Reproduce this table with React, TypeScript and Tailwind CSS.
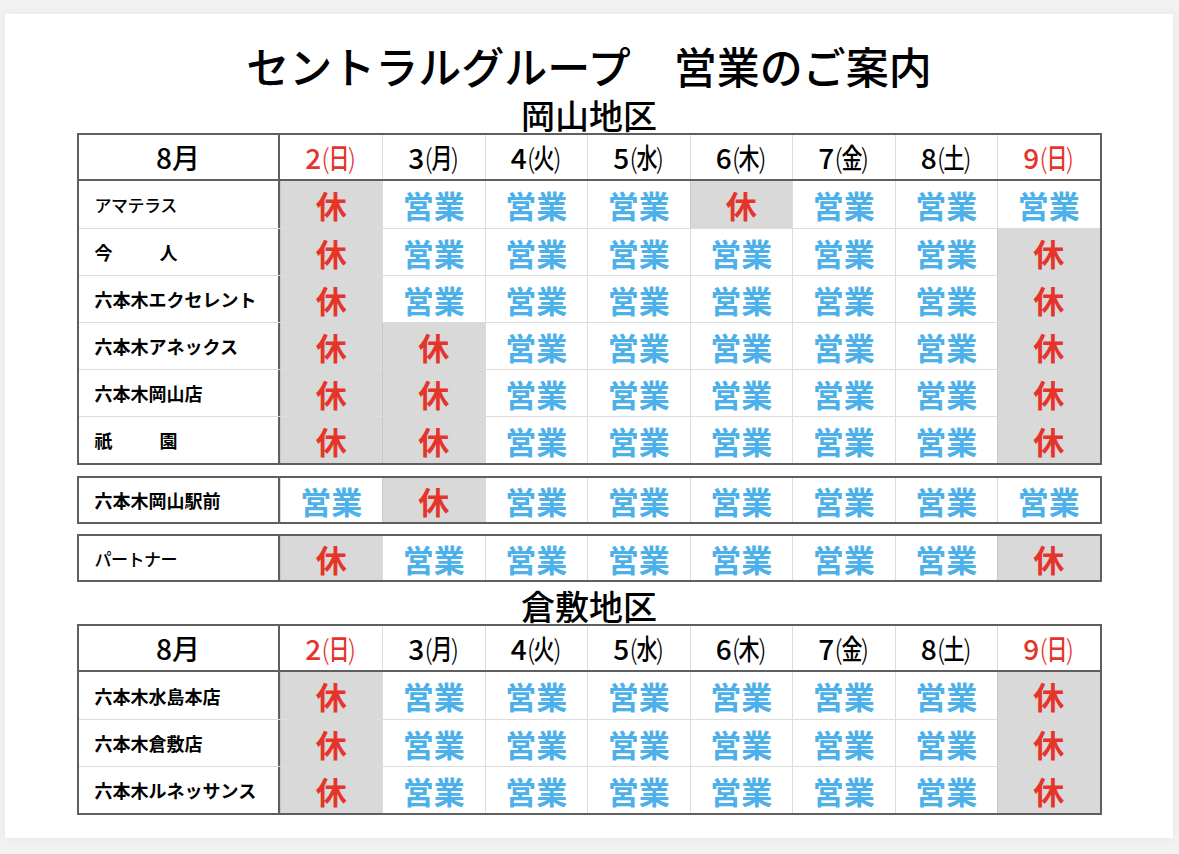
import React from 'react';

type Status = 'open' | 'closed';

type Row = {
  name: string[];
  days: Status[];
  small?: boolean;
};

const O: Status = 'open';
const C: Status = 'closed';

const days = [
  { n: '2', d: '日', red: true },
  { n: '3', d: '月' },
  { n: '4', d: '火' },
  { n: '5', d: '水' },
  { n: '6', d: '木' },
  { n: '7', d: '金' },
  { n: '8', d: '土' },
  { n: '9', d: '日', red: true },
];

const okayamaRows: Row[] = [
  { name: ['アマテラス'], days: [C, O, O, O, C, O, O, O], small: true },
  { name: ['今', '人'], days: [C, O, O, O, O, O, O, C] },
  { name: ['六本木エクセレント'], days: [C, O, O, O, O, O, O, C] },
  { name: ['六本木アネックス'], days: [C, C, O, O, O, O, O, C] },
  { name: ['六本木岡山店'], days: [C, C, O, O, O, O, O, C] },
  { name: ['祇', '園'], days: [C, C, O, O, O, O, O, C] },
];

const ekimaeRows: Row[] = [{ name: ['六本木岡山駅前'], days: [O, C, O, O, O, O, O, O] }];

const partnerRows: Row[] = [{ name: ['パートナー'], days: [C, O, O, O, O, O, O, C], small: true }];

const kurashikiRows: Row[] = [
  { name: ['六本木水島本店'], days: [C, O, O, O, O, O, O, C] },
  { name: ['六本木倉敷店'], days: [C, O, O, O, O, O, O, C] },
  { name: ['六本木ルネッサンス'], days: [C, O, O, O, O, O, O, C] },
];

const font = { fontFamily: '"Noto Sans CJK JP", "Noto Sans", sans-serif' };

const DayLabel: React.FC<{ n: string; d: string; red?: boolean }> = ({ n, d, red }) => (
  <div className={`flex items-center justify-center text-[28px] font-medium leading-none ${red ? 'text-[#e5352b]' : 'text-black'}`}>
    <span>{n}</span>
    <span className="font-light text-[27px] -mr-[1px]">(</span>
    <span className="inline-flex w-[20px] justify-center">
      <span className="inline-block scale-x-[0.75]">{d}</span>
    </span>
    <span className="font-light text-[27px] -ml-[1px]">)</span>
  </div>
);

const Cell: React.FC<{ status: Status }> = ({ status }) =>
  status === 'open' ? (
    <div className="flex items-center justify-center border-l border-[#dcdcdc] text-[31px] font-bold leading-none text-[#4cb0ea]">
      営業
    </div>
  ) : (
    <div className="flex items-center justify-center border-l border-[#c8c8c8] bg-[#d9d9d9] text-[31px] font-bold leading-none text-[#e5352b]">
      休
    </div>
  );

const BodyRow: React.FC<{ row: Row; height: string; first: boolean }> = ({ row, height, first }) => (
  <div className={`grid grid-cols-[201px_repeat(8,minmax(0,1fr))] ${height} ${first ? '' : 'border-t border-[#dcdcdc]'}`}>
    <div className="flex items-center border-r-2 border-[#5f5f5f] pl-[16px]">
      {row.name.length > 1 ? (
        <div className="flex gap-[47px] text-[18px] font-bold leading-none text-black">
          {row.name.map(part => (
            <span key={part}>{part}</span>
          ))}
        </div>
      ) : (
        <span
          className={`leading-none text-black ${row.small ? 'text-[17px] font-medium tracking-[-0.5px]' : 'text-[18px] font-bold'}`}
        >
          {row.name[0]}
        </span>
      )}
    </div>
    {row.days.map((s, i) => (
      <Cell key={i} status={s} />
    ))}
  </div>
);

const Table: React.FC<{ rows: Row[]; header?: boolean; rowHeight: string }> = ({ rows, header, rowHeight }) => (
  <div className="w-[1025px] border-2 border-[#5f5f5f]">
    {header && (
      <div className="grid h-[46px] grid-cols-[201px_repeat(8,minmax(0,1fr))] border-b-2 border-[#5f5f5f]">
        <div className="flex items-center justify-center border-r-2 border-[#5f5f5f] text-[28px] font-medium leading-none text-black">
          8月
        </div>
        {days.map((d, i) => (
          <div key={i} className={`flex items-center justify-center ${i === 0 ? '' : 'border-l border-[#dcdcdc]'}`}>
            <DayLabel n={d.n} d={d.d} red={d.red} />
          </div>
        ))}
      </div>
    )}
    {rows.map((r, i) => (
      <BodyRow key={r.name.join('')} row={r} height={rowHeight} first={i === 0} />
    ))}
  </div>
);

export default function App() {
  return (
    <div className="min-h-[854px] w-full bg-[#f2f2f2] pl-[5px] pr-[6px] pt-[14px]" style={font}>
      <div className="flex h-[824px] flex-col items-center bg-white pt-[30px] shadow-[0_0_10px_rgba(0,0,0,0.06)]">
        <h1 className="text-[43px] font-medium leading-none text-black">
          セントラルグループ　営業のご案内
        </h1>
        <h2 className="mt-[11px] h-[35px] text-[34px] font-medium leading-none text-black">岡山地区</h2>
        <Table rows={okayamaRows} header rowHeight="h-[47px]" />
        <div className="mt-[11px]">
          <Table rows={ekimaeRows} rowHeight="h-[44px]" />
        </div>
        <div className="mt-[10px]">
          <Table rows={partnerRows} rowHeight="h-[44px]" />
        </div>
        <h2 className="mt-[7px] h-[35px] text-[34px] font-medium leading-none text-black">倉敷地区</h2>
        <Table rows={kurashikiRows} header rowHeight="h-[47px]" />
      </div>
    </div>
  );
}
